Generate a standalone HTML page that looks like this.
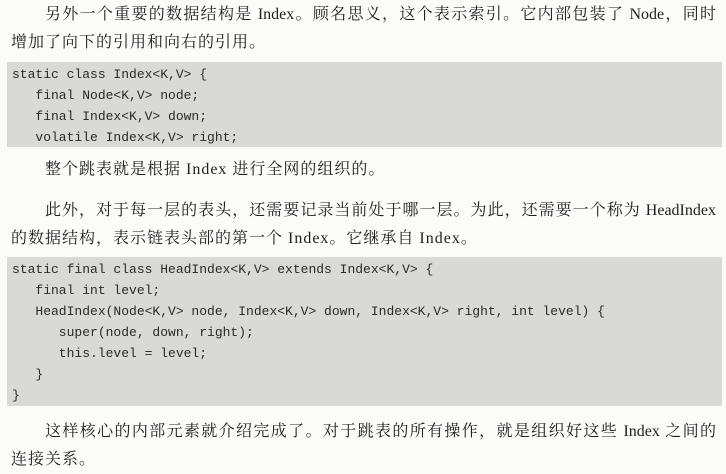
<!DOCTYPE html>
<html><head><meta charset="utf-8"><style>
body{margin:0;width:726px;height:473px;background:#fbfbfa;position:relative;overflow:hidden;
font-family:"Liberation Serif","Noto Serif CJK SC","Noto Sans CJK SC",serif;color:#1e1e1e;}
.l{position:absolute;left:11px;width:705px;height:28px;line-height:28px;font-size:16px;white-space:nowrap;}
.j{text-align:justify;text-align-last:justify;}
.box{position:absolute;left:7px;width:715px;background:#d9d9d8;}
.c{font-family:"Liberation Mono",monospace;font-size:13px;line-height:21px;color:#2a2a2a;white-space:pre;padding-left:5px;}
</style></head><body>
<div class="l j" style="top:1px;padding-left:34px;width:671px">另外一个重要的数据结构是 Index。顾名思义，这个表示索引。它内部包装了 Node，同时</div>
<div class="l" style="top:29px;letter-spacing:1px">增加了向下的引用和向右的引用。</div>
<div class="box" style="top:62px;height:85px"><div class="c" style="padding-top:2px">static class Index&lt;K,V&gt; {
   final Node&lt;K,V&gt; node;
   final Index&lt;K,V&gt; down;
   volatile Index&lt;K,V&gt; right;</div></div>
<div class="l" style="top:156px;padding-left:34px;letter-spacing:1px">整个跳表就是根据 Index 进行全网的组织的。</div>
<div class="l j" style="top:197px;padding-left:34px;width:671px">此外，对于每一层的表头，还需要记录当前处于哪一层。为此，还需要一个称为 HeadIndex</div>
<div class="l" style="top:225px;letter-spacing:1px">的数据结构，表示链表头部的第一个 Index。它继承自 Index。</div>
<div class="box" style="top:257px;height:149px"><div class="c" style="padding-top:2px">static final class HeadIndex&lt;K,V&gt; extends Index&lt;K,V&gt; {
   final int level;
   HeadIndex(Node&lt;K,V&gt; node, Index&lt;K,V&gt; down, Index&lt;K,V&gt; right, int level) {
      super(node, down, right);
      this.level = level;
   }
}</div></div>
<div class="l j" style="top:418px;padding-left:34px;width:671px">这样核心的内部元素就介绍完成了。对于跳表的所有操作，就是组织好这些 Index 之间的</div>
<div class="l" style="top:446px;letter-spacing:1px">连接关系。</div>
</body></html>
